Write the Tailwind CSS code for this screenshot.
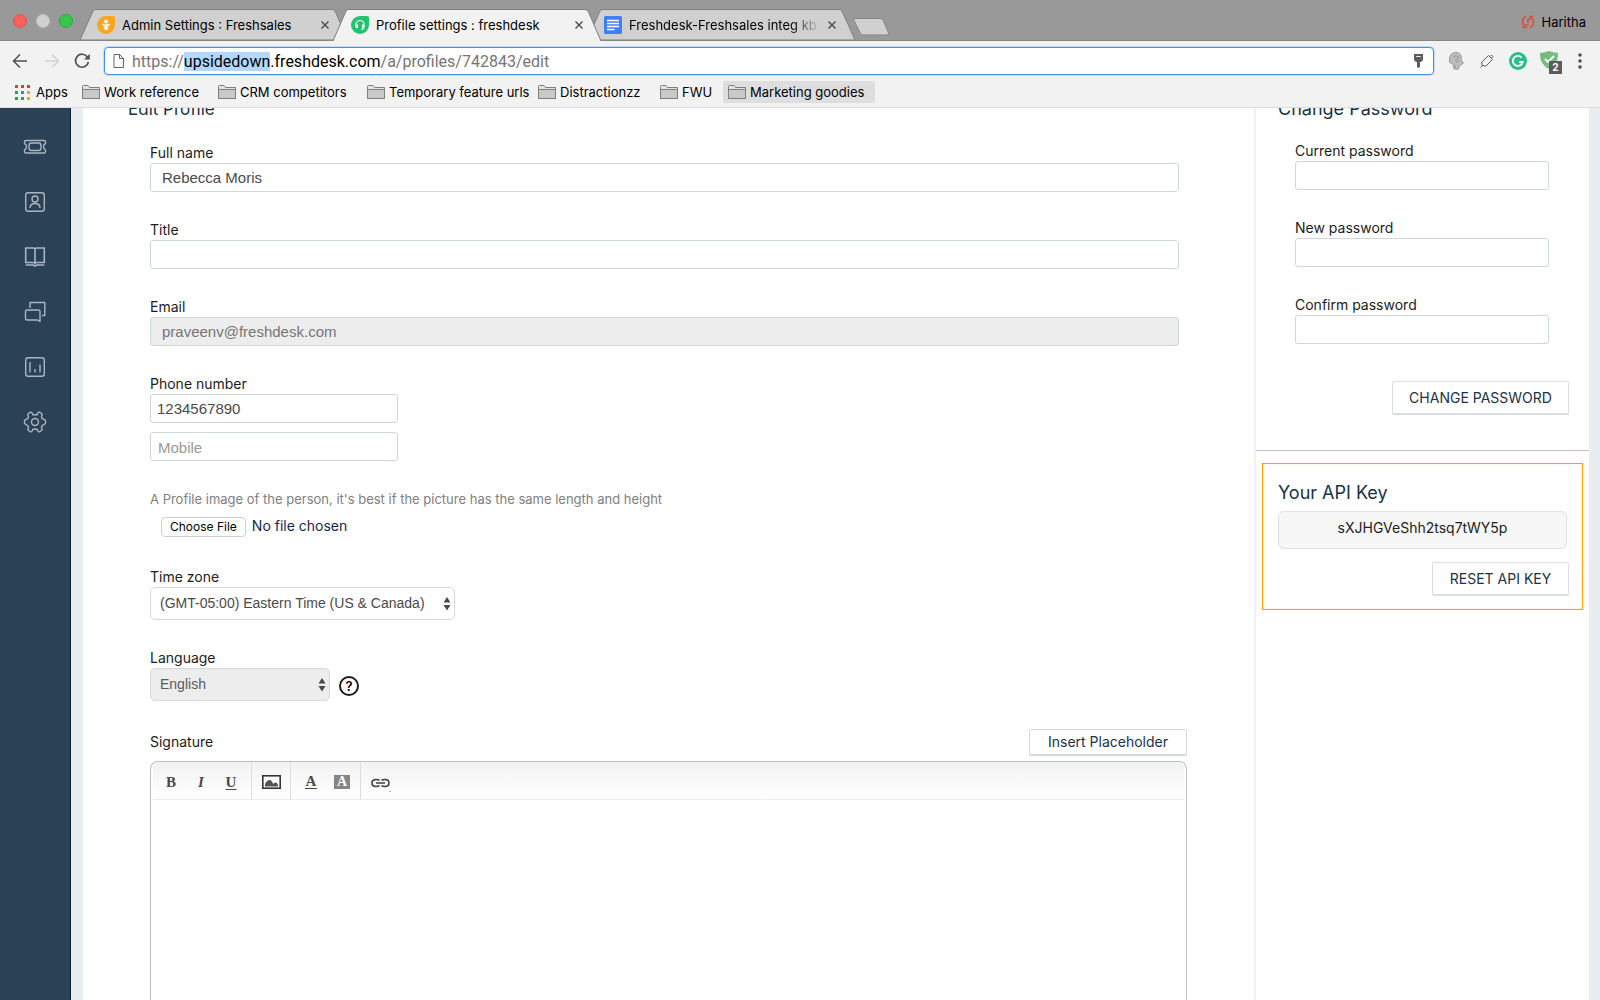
<!DOCTYPE html>
<html lang="en">
<head>
<meta charset="utf-8">
<title>Profile settings : freshdesk</title>
<script src="https://cdn.jsdelivr.net/npm/@tailwindcss/browser@4"></script>
</head>
<body class="h-screen overflow-hidden flex flex-col bg-white font-['Inter',sans-serif] text-black">

<svg class="hidden">
  <defs>
    <symbol id="folder" viewBox="0 0 18 14"><path d="M.5 13.5V1.500Q.5.5 1.500.5H6L7.500 2.500H17.500V13.500Z" fill="#e4e4e4" stroke="#7f7f7f"/><path d="M.5 4.500H17.500V13.500H.5Z" fill="#c9c9c9" stroke="#7f7f7f"/></symbol>
    <symbol id="cross" viewBox="0 0 10 10"><path d="M1.500 1.500 8.500 8.500M8.500 1.500 1.500 8.500" stroke="#4a4a4a" stroke-width="1.400" fill="none"/></symbol>
    <symbol id="updown" viewBox="0 0 8 14"><path d="M4 0 7.500 5.500H.5ZM4 13.500 7.500 8H.5Z" fill="#4a4a4a"/></symbol>
  </defs>
</svg>

<!-- Tab strip -->
<header class="h-[41px] shrink-0 bg-[#999999] border-b border-[#858585] flex items-end">
  <div class="flex gap-[9px] w-[80px] pl-[13px] pb-[12px] shrink-0">
    <span class="size-[14px] shrink-0 rounded-full bg-[#fc605c] border border-[#e2544f]"></span>
    <span class="size-[14px] shrink-0 rounded-full bg-[#d0d0d0] border border-[#c0c0c0]"></span>
    <span class="size-[14px] shrink-0 rounded-full bg-[#34c84a] border border-[#27ab38]"></span>
  </div>
  <div class="relative w-[268px] h-[31px] shrink-0 flex items-center pl-[17px] pr-[18px] gap-[7px]">
    <svg class="absolute inset-0 size-full" viewBox="0 0 268 31"><path d="M0 31 13 2Q14 .5 16 .5H252Q254 .5 255 2L268 31Z" fill="#d0d0d0" stroke="#7e7e7e"/></svg>
    <svg class="relative size-[18px] shrink-0" viewBox="0 0 18 18"><path d="M9 0H16Q18 0 18 2V9A9 9 0 1 1 9 0Z" fill="#fca51f"/><circle cx="9" cy="5.500" r="2" fill="#fff"/><path d="M5 7.500Q9 9.500 13 7.500L12.500 9.500 10.300 10V11.500H12L9 14.500 6 11.500H7.700V10L5.500 9.500Z" fill="#fff"/></svg>
    <span class="relative flex-1 text-[13px] leading-5 whitespace-nowrap overflow-hidden">Admin Settings : Freshsales</span>
    <button aria-label="Close tab" class="relative size-[10px]"><svg class="size-[10px]"><use href="#cross"/></svg></button>
  </div>
  <div class="relative z-10 -ml-[15px] -mb-px w-[268px] h-[32px] shrink-0 flex items-center pl-[18px] pr-[17px] gap-[7px]">
    <svg class="absolute inset-0 size-full" viewBox="0 0 268 32"><path d="M0 32 13 2Q14 .5 16 .5H252Q254 .5 255 2L268 32" fill="#f2f2f2" stroke="#7e7e7e"/></svg>
    <svg class="relative size-[18px] shrink-0" viewBox="0 0 18 18"><path d="M9 0H16Q18 0 18 2V9A9 9 0 1 1 9 0Z" fill="#25c16f"/><path d="M5 11V8.500A4 4 0 0 1 13 8.500V11Q13 13.500 10 13.500" stroke="#fff" stroke-width="1.200" fill="none"/><path d="M5 8.500H7V12H5ZM11 8.500H13V12H11Z" fill="#fff"/></svg>
    <span class="relative flex-1 text-[13px] leading-5 whitespace-nowrap overflow-hidden">Profile settings : freshdesk</span>
    <button aria-label="Close tab" class="relative size-[10px]"><svg class="size-[10px]"><use href="#cross"/></svg></button>
  </div>
  <div class="relative -ml-[14px] w-[268px] h-[31px] shrink-0 flex items-center pl-[17px] pr-[18px] gap-[7px]">
    <svg class="absolute inset-0 size-full" viewBox="0 0 268 31"><path d="M0 31 13 2Q14 .5 16 .5H252Q254 .5 255 2L268 31Z" fill="#d0d0d0" stroke="#7e7e7e"/></svg>
    <svg class="relative size-[18px] shrink-0" viewBox="0 0 18 18"><rect width="18" height="18" rx="1.500" fill="#3f80f3"/><path d="M3 4.500H15M3 7.500H15M3 10.500H15M3 13.500H10.500" stroke="#fff" stroke-width="1.600"/></svg>
    <span class="relative flex-1 text-[13px] leading-5 whitespace-nowrap overflow-hidden [mask-image:linear-gradient(90deg,#000_85%,transparent)]">Freshdesk-Freshsales integ kb</span>
    <button aria-label="Close tab" class="relative size-[10px]"><svg class="size-[10px]"><use href="#cross"/></svg></button>
  </div>
  <button aria-label="New tab" class="-ml-[2px] mb-[4px] w-9 h-[18px]"><svg viewBox="0 0 36 18" class="w-9 h-[18px]"><path d="M2 .5H27Q29 .5 30 2L35.500 15Q36 17 34 17H10Q8 17 7.500 15.500L.8 2Q.5.5 2 .5Z" fill="#d0d0d0" stroke="#868686"/></svg></button>
  <div class="ml-auto pr-[14px] pb-[8px] flex items-center gap-[7px] text-[13px] leading-5">
    <svg class="size-[14px]" viewBox="0 0 14 14" fill="none" stroke="#d9513c" stroke-width="1.600"><path d="M5 1.500Q1.500 3 1.500 7 1.500 9.500 3.500 11.500M1.500 12.500H5V9M9 12.500Q12.500 11 12.500 7 12.500 4.500 10.500 2.500M12.500 1.500H9V5M7 3.500V8M7 9.500V11"/></svg>
    <span>Haritha</span>
  </div>
</header>

<!-- Address bar -->
<div class="h-[40px] shrink-0 bg-[#f2f2f2] flex items-center pl-[12px] pr-[18px]">
  <button aria-label="Back" class="mr-4"><svg class="size-4" viewBox="0 0 16 16" fill="none" stroke="#505050" stroke-width="1.500"><path d="M15 8H1.500M8 1.500 1.500 8 8 14.500"/></svg></button>
  <button aria-label="Forward" class="mr-[14px]"><svg class="size-4" viewBox="0 0 16 16" fill="none" stroke="#d2d2d2" stroke-width="1.500"><path d="M1 8H14.500M8 1.500 14.500 8 8 14.500"/></svg></button>
  <button aria-label="Reload" class="mr-[14px]"><svg class="size-4" viewBox="0 0 16 16" fill="none" stroke="#505050" stroke-width="1.700"><path d="M13.500 4.200A6.500 6.500 0 1 0 14.400 9"/><path d="M15.800.8V6.500H10Z" fill="#505050" stroke="none"/></svg></button>
  <div class="flex-1 h-[28px] bg-white border border-[#3b92ec] rounded-[4px] flex items-center pl-[8px] pr-[9px] shadow-[0_0_0_1px_#8fc1f566]">
    <svg class="w-[11px] h-[14px] mr-[8px]" viewBox="0 0 11 14" fill="none" stroke="#666"><path d="M1 .5H6.500L10.500 4.500V13.500H1ZM6.500.5V4.500H10.500"/></svg>
    <div role="textbox" aria-label="Address" contenteditable="true" spellcheck="false" class="flex-1 pt-[2px] font-['Roboto',sans-serif] text-[16px] leading-5 text-[#757575] whitespace-nowrap outline-none"><span>https://</span><span class="bg-[#b3d7fe] text-black">upsidedown</span><span class="text-black">.freshdesk.com</span><span>/a/profiles/742843/edit</span></div>
    <svg class="w-[9px] h-[14px] mx-px" viewBox="0 0 9 14"><path d="M0 0H9V5Q9 7.500 6 8V13L4.500 14 3 13V8Q0 7.500 0 5Z" fill="#5c5c5c"/><path d="M2 2.500H7" stroke="#ddd"/></svg>
  </div>
  <div class="flex items-center ml-[15px]">
    <svg class="w-[15px] h-[18px] mr-[16px]" viewBox="0 0 15 18"><path d="M2 2.500Q7 -2 11.500 2.500 13.500 5 12 8L14.500 11 11 13.500 9 17.500 5 17 4 12.500.5 10Q-.5 5 2 2.500Z" fill="#bdbdbd" stroke="#8f8f8f" stroke-width=".8"/><path d="M4.500 5Q7 2.500 9.500 5 9 8 6 8.500M7 10 10 9M6 13V16" fill="none" stroke="#959595"/></svg>
    <svg class="size-[14px] mr-[15px]" viewBox="0 0 14 14" fill="none" stroke="#5c5c5c"><path d="M8.500 1.500 12.500 5.500 6 12 2 11.500 1.800 8ZM10 2.500 11.500 1 13 2.500 11.700 4.200M2 12 .5 13.500"/></svg>
    <svg class="size-[18px] mr-[13px]" viewBox="0 0 18 18"><circle cx="9" cy="9" r="9" fill="#25bf87"/><path d="M12.500 5.500A5 5 0 1 0 13.700 10H10" fill="none" stroke="#fff" stroke-width="1.900"/></svg>
    <div class="relative w-[22px] h-[20px] mr-[16px]">
      <svg class="w-[18px] h-[18px]" viewBox="0 0 18 18"><path d="M0 2Q5 1.500 9 0 13 1.500 18 2 18.500 13 9 18-.5 13 0 2Z" fill="#74bd7c"/><path d="M5 8 8 11 14 5" stroke="#fff" stroke-width="1.800" fill="none"/></svg>
      <span class="absolute left-[9px] top-[10px] w-[13px] h-[13px] bg-[#5c5c5c] text-white text-[10px] leading-[13px] font-bold text-center">2</span>
    </div>
    <button aria-label="Menu"><svg class="w-1 h-[16px]" viewBox="0 0 4 16" fill="#505050"><circle cx="2" cy="2" r="1.800"/><circle cx="2" cy="8" r="1.800"/><circle cx="2" cy="14" r="1.800"/></svg></button>
  </div>
</div>

<!-- Bookmarks -->
<nav aria-label="Bookmarks" class="h-[27px] shrink-0 bg-[#f2f2f2] border-b border-[#dcdcdc] flex items-center pl-[15px] pb-[4px] text-[13px] leading-5 whitespace-nowrap">
  <a href="#" class="flex items-center gap-[6px] w-[67px]"><svg class="size-[15px]" viewBox="0 0 15 15"><path d="M0 0H3V3H0ZM6 0H9V3H6ZM12 0H15V3H12Z" fill="#e8372b"/><path d="M0 6H3V9H0ZM0 12H3V15H0ZM6 12H9V15H6Z" fill="#2e9e4d"/><path d="M6 6H9V9H6Z" fill="#3c80f0"/><path d="M12 6H15V9H12ZM12 12H15V15H12Z" fill="#f0a32c"/></svg>Apps</a>
  <a href="#" class="flex items-center gap-[4px] w-[136px]"><svg class="w-[18px] h-[14px]"><use href="#folder"/></svg>Work reference</a>
  <a href="#" class="flex items-center gap-[4px] w-[149px]"><svg class="w-[18px] h-[14px]"><use href="#folder"/></svg>CRM competitors</a>
  <a href="#" class="flex items-center gap-[4px] w-[162px] mr-[9px]"><svg class="w-[18px] h-[14px] shrink-0"><use href="#folder"/></svg><span class="overflow-hidden">Temporary feature urls</span></a>
  <a href="#" class="flex items-center gap-[4px] w-[122px]"><svg class="w-[18px] h-[14px]"><use href="#folder"/></svg>Distractionzz</a>
  <a href="#" class="flex items-center gap-[4px] w-[63px]"><svg class="w-[18px] h-[14px]"><use href="#folder"/></svg>FWU</a>
  <a href="#" class="flex items-center gap-[4px] w-[152px] h-[22px] px-[5px] bg-[#dedede] rounded-[2px]"><svg class="w-[18px] h-[14px]"><use href="#folder"/></svg>Marketing goodies</a>
</nav>

<div class="flex-1 min-h-0 flex bg-[#e9edf1]">
  <!-- Side navigation -->
  <nav aria-label="Main" class="w-[71px] shrink-0 bg-[#2a4156] border-r border-[#0b1c48] mr-[12px] flex flex-col items-center pt-[27px] gap-[31px]">
    <a href="#" aria-label="Tickets"><svg class="block size-6" viewBox="0 0 24 24" fill="none" stroke="#a9b6c0" stroke-width="1.400" stroke-linejoin="round"><path d="M3 5.500H21Q22.500 5.500 22.500 7V8.500Q20.500 9.500 20.500 11.700T22.500 15V16.500Q22.500 18 21 18H3Q1.500 18 1.500 16.500V15Q3.500 14 3.500 11.700T1.500 8.500V7Q1.500 5.500 3 5.500Z"/><rect x="6" y="8" width="12" height="7.500" rx="2.500"/></svg></a>
    <a href="#" aria-label="Contacts"><svg class="block size-6" viewBox="0 0 24 24" fill="none" stroke="#a9b6c0" stroke-width="1.400"><rect x="2.700" y="2.700" width="18.600" height="18.600" rx="2.500"/><circle cx="12" cy="9" r="3"/><path d="M7 18Q7 13.500 12 13.500T17 18"/></svg></a>
    <a href="#" aria-label="Solutions"><svg class="block size-6" viewBox="0 0 24 24" fill="none" stroke="#a9b6c0" stroke-width="1.600"><path d="M2.700 3H10.500Q12 3 12 4.500 12 3 13.500 3H21.300V17.500H13.500Q12 17.500 12 19 12 17.500 10.500 17.500H2.700ZM12 4.500V18M2.700 20H10.500L12 21 13.500 20H21.300"/></svg></a>
    <a href="#" aria-label="Forums"><svg class="block size-6" viewBox="0 0 24 24" fill="none" stroke="#a9b6c0" stroke-width="1.400" stroke-linejoin="round"><path d="M7 8V2.500H21.800V15.500H19M4 10H15.500Q17 10 17 11.500V21.500L14.500 20H4Q2.500 20 2.500 18.500V11.500Q2.500 10 4 10Z"/></svg></a>
    <a href="#" aria-label="Reports"><svg class="block size-6" viewBox="0 0 24 24" fill="none" stroke="#a9b6c0" stroke-width="1.400"><rect x="2.700" y="2.700" width="18.600" height="18.600" rx="2.500"/><path d="M7 7V17.500M12 14V17.500M17 9.500V17.500"/></svg></a>
    <a href="#" aria-label="Admin"><svg class="block size-6" viewBox="0 0 24 24" fill="none" stroke="#a9b6c0" stroke-width="1.400" stroke-linejoin="round"><circle cx="12" cy="12" r="3.500"/><path d="M9.800 4.800Q9 1.800 7.500 2.200L5.500 3.500Q4.200 4.500 5.600 7 5 9 3.200 9.300 1.300 9.800 1.300 12T3.200 14.700Q5 15 5.600 17 4.200 19.500 5.500 20.500L7.500 21.800Q9 22.200 9.800 19.200H14.200Q15 22.200 16.500 21.800L18.500 20.500Q19.800 19.500 18.400 17 19 15 20.800 14.700 22.700 14.200 22.700 12T20.800 9.300Q19 9 18.400 7 19.800 4.500 18.500 3.500L16.500 2.200Q15 1.800 14.200 4.800Z"/></svg></a>
  </nav>

  <main class="flex-1 min-w-0 bg-white mr-[11px] flex overflow-hidden">
    <form class="flex-1 min-w-0 flex flex-col pl-[67px] pr-[67px] text-[14px] leading-5 text-[#1c1c1c]">
      <h1 class="-mt-[9px] -ml-[22px] h-5 text-[17px] leading-5 text-[#183247]">Edit Profile</h1>
      <div class="mt-[24px] mr-2 flex flex-col">
        <label for="name">Full name</label>
        <input id="name" type="text" value="Rebecca Moris" class="h-[29px] border border-[#cfd7d7] rounded-[3px] px-[11px] font-['Liberation_Sans',sans-serif] text-[15px] text-[#4a4a4a]">
      </div>
      <div class="mt-[28px] mr-2 flex flex-col">
        <label for="title">Title</label>
        <input id="title" type="text" class="h-[29px] border border-[#cfd7d7] rounded-[3px] px-[11px] font-['Liberation_Sans',sans-serif] text-[15px] text-[#4a4a4a]">
      </div>
      <div class="mt-[28px] mr-2 flex flex-col">
        <label for="email">Email</label>
        <input id="email" type="email" disabled value="praveenv@freshdesk.com" class="h-[29px] border border-[#cfd7d7] rounded-[3px] px-[11px] bg-[#ededed] font-['Liberation_Sans',sans-serif] text-[15px] text-[#757575]">
      </div>
      <div class="mt-[28px] w-[248px] flex flex-col">
        <label for="phone">Phone number</label>
        <input id="phone" type="tel" value="1234567890" class="h-[29px] border border-[#cfd7d7] rounded-[3px] px-[6px] font-['Liberation_Sans',sans-serif] text-[15px] text-[#4a4a4a]">
        <input aria-label="Mobile" type="tel" placeholder="Mobile" class="mt-[9px] h-[29px] border border-[#cfd7d7] rounded-[3px] px-[7px] pt-[2px] font-['Liberation_Sans',sans-serif] text-[15px] placeholder:text-[#999]">
      </div>
      <label for="photo" class="mt-[28px] text-[13px] text-[#808080]">A Profile image of the person, it's best if the picture has the same length and height</label>
      <input id="photo" type="file" class="mt-[7px] ml-[11px] h-[21px] w-[300px] text-[14px] leading-[19px] text-[#12294d] file:mr-[6px] file:h-[20px] file:px-[8px] file:border file:border-solid file:border-[#cfcfcf] file:rounded-[4px] file:bg-white file:text-[12px] file:leading-[18px] file:text-black">
      <div class="mt-[30px] w-[305px] flex flex-col">
        <label for="zone">Time zone</label>
        <div class="relative flex">
          <select id="zone" class="appearance-none w-full h-[33px] border border-[#d3d9dd] rounded-[5px] px-[9px] pb-px bg-white font-['Liberation_Sans',sans-serif] text-[14px] text-[#4a4a4a]"><option>(GMT-05:00) Eastern Time (US &amp; Canada)</option></select>
          <svg class="absolute right-[4px] top-[10px] w-2 h-[14px] pointer-events-none"><use href="#updown"/></svg>
        </div>
      </div>
      <div class="mt-[28px] flex flex-col">
        <label for="lang">Language</label>
        <div class="flex items-center gap-[9px]">
          <div class="relative flex w-[180px]">
            <select id="lang" class="appearance-none w-full h-[33px] border border-[#d3d9dd] rounded-[5px] px-[9px] pb-px bg-[#ededed] font-['Liberation_Sans',sans-serif] text-[14px] text-[#5a5a5a]"><option>English</option></select>
            <svg class="absolute right-[4px] top-[10px] w-2 h-[14px] pointer-events-none"><use href="#updown"/></svg>
          </div>
          <button type="button" aria-label="Help" class="mt-[2px] size-[20px] rounded-full border-2 border-[#1c1c1c] text-[13px] leading-4 font-semibold text-black">?</button>
        </div>
      </div>
      <div class="mt-[28px] h-[26px] flex justify-between items-center">
        <span id="sig">Signature</span>
        <button type="button" class="w-[158px] h-[27px] border border-[#d3d9dd] border-b-2 rounded-[2px] text-[14px] text-[#183247]">Insert Placeholder</button>
      </div>
      <div class="mt-[6px] flex-1 min-h-[240px] border border-b-0 border-[#bdbdbd] rounded-t-[8px] flex flex-col">
        <div class="h-[38px] mx-[2px] shrink-0 flex bg-linear-to-b from-[#f2f2f2] to-white border-b border-[#ececec] rounded-t-[6px] font-['Liberation_Serif',serif] text-[15px] font-bold text-[#4a4a4a]">
          <div class="w-[99px] flex items-center pl-[12px] gap-[18px] border-r border-[#dcdcdc] pt-[3px]">
            <button type="button" class="w-3">B</button>
            <button type="button" class="w-3 italic">I</button>
            <button type="button" class="w-3 underline underline-offset-2">U</button>
          </div>
          <div class="w-[39px] flex items-center justify-center border-r border-[#dcdcdc] pt-[3px]">
            <button type="button" aria-label="Insert image"><svg class="w-[19px] h-[14px]" viewBox="0 0 19 14"><rect x=".8" y=".8" width="17.400" height="12.400" fill="#fff" stroke="#333" stroke-width="1.600"/><path d="M3 11.500V9Q5 5 7.500 5T11 9Q12.500 7 14 7.500T16 10V11.500Z" fill="#555"/></svg></button>
          </div>
          <div class="w-[70px] flex items-center pl-[14px] gap-[17px] border-r border-[#dcdcdc] pt-[3px]">
            <button type="button" aria-label="Text colour" class="w-[12px] h-[14px] leading-[13px] border-b border-[#4a4a4a]">A</button>
            <button type="button" aria-label="Highlight colour" class="w-[16px] h-[14px] leading-[14px] text-[14px] bg-[#858585] text-white">A</button>
          </div>
          <button type="button" aria-label="Insert link" class="pl-[10px] pt-[4px]"><svg class="w-[21px] h-[18px]" viewBox="0 0 21 18" fill="none" stroke="#3f3f3f" stroke-width="1.600"><path d="M8.500 6.500Q7.500 5.500 5 5.500 1 5.500 1 9T5 12.500Q7.500 12.500 8.500 11.500M10.500 6.500Q11.500 5.500 14 5.500 18 5.500 18 9T14 12.500Q11.500 12.500 10.500 11.500M5 9H14"/><path d="M18 17H20L19 18Z" fill="#666" stroke="none"/></svg></button>
        </div>
        <textarea aria-labelledby="sig" class="flex-1 resize-none outline-none px-3 py-2"></textarea>
      </div>
    </form>

    <aside class="w-[335px] shrink-0 border-l-2 border-[#f2f2f3] text-[14px] leading-5 text-[#1c1c1c]">
      <form class="flex flex-col pl-[39px] pr-[40px]">
        <h2 class="-mt-[9px] -ml-[17px] h-5 text-[18px] leading-5 text-[#183247]">Change Password</h2>
        <div class="mt-[22px] flex flex-col">
          <label for="cur">Current password</label>
          <input id="cur" type="password" class="h-[29px] border border-[#cfd7d7] rounded-[3px] px-2">
        </div>
        <div class="mt-[28px] flex flex-col">
          <label for="new">New password</label>
          <input id="new" type="password" class="h-[29px] border border-[#cfd7d7] rounded-[3px] px-2">
        </div>
        <div class="mt-[28px] flex flex-col">
          <label for="conf">Confirm password</label>
          <input id="conf" type="password" class="h-[29px] border border-[#cfd7d7] rounded-[3px] px-2">
        </div>
        <button type="button" class="mt-[37px] -mr-[20px] self-end w-[177px] h-[34px] border border-b-2 border-[#d8dee3] rounded-[2px] text-[14px] text-[#183247]">CHANGE PASSWORD</button>
      </form>
      <hr class="mt-[35px] border-t border-[#c0c4c4]">
      <section class="mt-[12px] ml-[6px] mr-[6px] h-[147px] border border-[#ff9f00] shadow-[inset_0_0_1px_#ffb63f] pl-[15px] pr-[13px] pt-[19px] flex flex-col">
        <h2 class="text-[18px] leading-5 text-[#183247]">Your API Key</h2>
        <div class="mt-[8px] mr-[2px] h-[38px] pb-[5px] border border-[#dfe1e2] rounded-[6px] bg-[#f7f7f7] flex items-center justify-center text-[14px] text-[#222]">sXJHGVeShh2tsq7tWY5p</div>
        <button type="button" class="mt-[13px] self-end w-[137px] h-[34px] border border-b-2 border-[#d8dee3] rounded-[2px] text-[14px] text-[#183247]">RESET API KEY</button>
      </section>
    </aside>
  </main>
</div>
</body>
</html>
